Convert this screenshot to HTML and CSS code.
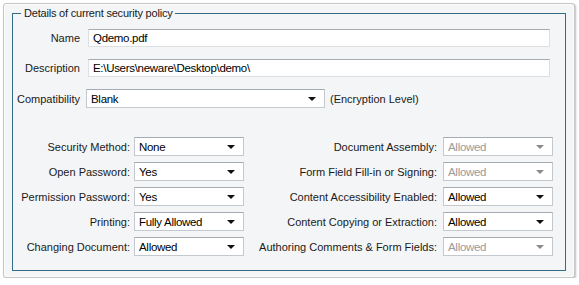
FILE: index.html
```html
<!DOCTYPE html>
<html lang="en">
<head>
    <meta charset="UTF-8">
    <title>Security policy</title>
    <link rel="stylesheet" href="styles.css">
</head>
<body>
    <div class="frame">
        <fieldset class="policy">
            <legend>Details of current security policy</legend>

            <!-- file info -->
            <div class="info">
                <label class="info-label">Name</label>
                <div class="textbox">Qdemo.pdf</div>

                <label class="info-label">Description</label>
                <div class="textbox">E:\Users\neware\Desktop\demo\</div>

                <label class="info-label">Compatibility</label>
                <div class="compat-row">
                    <div class="combo compat"><span>Blank</span><span class="arrow"></span></div>
                    <span class="note">(Encryption Level)</span>
                </div>
            </div>

            <!-- permissions -->
            <div class="perms">
                <label>Security Method:</label>
                <div class="combo"><span>None</span><span class="arrow"></span></div>
                <label>Document Assembly:</label>
                <div class="combo disabled"><span>Allowed</span><span class="arrow"></span></div>

                <label>Open Password:</label>
                <div class="combo"><span>Yes</span><span class="arrow"></span></div>
                <label>Form Field Fill-in or Signing:</label>
                <div class="combo disabled"><span>Allowed</span><span class="arrow"></span></div>

                <label>Permission Password:</label>
                <div class="combo"><span>Yes</span><span class="arrow"></span></div>
                <label>Content Accessibility Enabled:</label>
                <div class="combo"><span>Allowed</span><span class="arrow"></span></div>

                <label>Printing:</label>
                <div class="combo"><span>Fully Allowed</span><span class="arrow"></span></div>
                <label>Content Copying or Extraction:</label>
                <div class="combo"><span>Allowed</span><span class="arrow"></span></div>

                <label>Changing Document:</label>
                <div class="combo"><span>Allowed</span><span class="arrow"></span></div>
                <label>Authoring Comments &amp; Form Fields:</label>
                <div class="combo disabled"><span>Allowed</span><span class="arrow"></span></div>
            </div>
        </fieldset>
    </div>
</body>
</html>
```

FILE: styles.css
```css
body {
    margin: 0;
    background-color: #fff;
    font-family: "Liberation Sans", Arial, sans-serif;
    font-size: 11px;
    color: #1a1a1a;
}
.frame {
    margin: 3px 4px 0 3px;
    height: 273px;
    border: 1px solid #c6c6c6;
    border-radius: 3px;
    background-color: #f4f5f6;
    box-shadow: 1px 1px 2px rgba(0, 0, 0, 0.25), inset 0 0 0 1px #fbfbfb;
}
.policy {
    margin: 1px 8px 0 8px;
    height: 266px;
    padding: 8px 15px 0 0;
    border: 1px solid #336c86;
    box-sizing: border-box;
    min-width: 0;
}
.policy legend {
    margin-left: 8px;
    padding: 0 3px;
    font-size: 11px;
    letter-spacing: -0.2px;
    line-height: 16px;
}
.info {
    display: grid;
    grid-template-columns: 67px 1fr;
    column-gap: 8px;
    row-gap: 12px;
    align-items: center;
}
.info-label {
    text-align: right;
}
.textbox {
    height: 18px;
    box-sizing: border-box;
    padding: 0 4px;
    background-color: #fff;
    border: 1px solid #dde0e3;
    border-top-color: #a6abb0;
    font-size: 11.5px;
    letter-spacing: -0.3px;
    line-height: 16px;
    color: #000;
}
.compat-row {
    display: flex;
    align-items: center;
    gap: 5px;
    margin-left: -2px;
}
.combo {
    height: 19px;
    box-sizing: border-box;
    display: flex;
    align-items: center;
    justify-content: space-between;
    padding: 0 8px 0 4px;
    background-color: #fff;
    border: 1px solid #c3c9ce;
    border-top-color: #a4abb2;
    font-size: 11.5px;
    letter-spacing: -0.3px;
    color: #000;
}
.combo.compat {
    width: 239px;
}
.combo.disabled {
    color: #9a9a9a;
}
.arrow {
    width: 0;
    height: 0;
    border-left: 4px solid transparent;
    border-right: 4px solid transparent;
    border-top: 4px solid #111;
}
.combo.disabled .arrow {
    border-top-color: #8a8a8a;
}
.perms {
    margin-top: 29px;
    display: grid;
    grid-template-columns: 117px 110px 1fr 110px;
    column-gap: 4px;
    row-gap: 6px;
    align-items: center;
    margin-right: -3px;
}
.perms label {
    text-align: right;
}
.perms label:nth-child(4n+3) {
    margin-right: 2px;
}
```
